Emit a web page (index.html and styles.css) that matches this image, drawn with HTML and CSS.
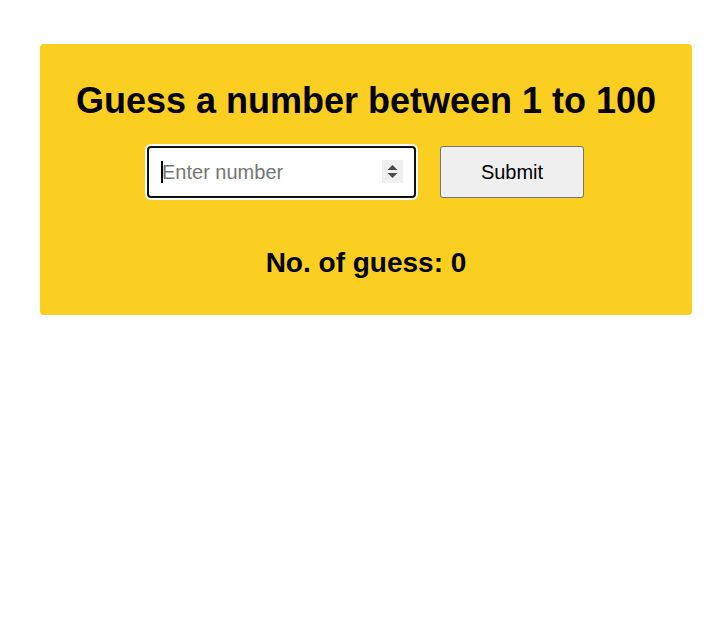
FILE: index.html
```html
<!DOCTYPE html>
<html lang="en">
<head>
<meta charset="utf-8">
<title>Guess the number</title>
<link rel="stylesheet" href="styles.css">
</head>
<body>
  <main class="card">
    <h1 class="title">Guess a number between 1 to 100</h1>
    <form class="row" onsubmit="return false">
      <span class="field">
        <input class="guess-input" type="number" placeholder="Enter number" autofocus>
        <span class="caret"></span>
        <span class="spinner">
          <svg width="21" height="23" viewBox="0 0 21 23">
            <polygon points="5.5,10 10.5,5 15.5,10" fill="#4a4a4a"/>
            <polygon points="5.5,13 15.5,13 10.5,18" fill="#4a4a4a"/>
          </svg>
        </span>
      </span>
      <button class="submit-btn" type="submit">Submit</button>
    </form>
    <h2 class="count">No. of guess: 0</h2>
  </main>
</body>
</html>
```

FILE: styles.css
```css
html, body {
  margin: 0;
  padding: 0;
  background: #ffffff;
}

body {
  font-family: "Liberation Sans", Arial, sans-serif;
  color: #000000;
}

.card {
  margin: 44px 36px 0 40px;
  padding: 36px 0 36px;
  background: #fbcf21;
  border-radius: 4px;
  text-align: center;
}

.title {
  margin: 0 0 25px;
  font-size: 36px;
  line-height: 41px;
  font-weight: bold;
}

.row {
  display: flex;
  justify-content: center;
  align-items: center;
  gap: 24px;
  height: 52px;
  padding-right: 1px;
}

.field {
  position: relative;
  display: block;
  width: 269px;
  height: 52px;
}

.guess-input {
  box-sizing: border-box;
  display: block;
  width: 100%;
  height: 52px;
  padding: 0 12px 0 13px;
  border: 2px solid #101010;
  border-radius: 4px;
  box-shadow: 0 0 0 2px #ffffff;
  outline: none;
  background: #ffffff;
  font-family: "Liberation Sans", Arial, sans-serif;
  font-size: 20px;
  color: #000000;
  caret-color: transparent;
  -moz-appearance: textfield;
}

.guess-input::placeholder {
  color: #757575;
}

.guess-input::-webkit-inner-spin-button,
.guess-input::-webkit-outer-spin-button {
  -webkit-appearance: none;
  margin: 0;
}

.caret {
  position: absolute;
  left: 14px;
  top: 15px;
  width: 2px;
  height: 22px;
  background: #000000;
  pointer-events: none;
}

.spinner {
  position: absolute;
  right: 13px;
  top: 14px;
  width: 21px;
  height: 23px;
  background: #efefef;
  pointer-events: none;
}

.spinner svg {
  display: block;
}

.submit-btn {
  box-sizing: border-box;
  width: 144px;
  height: 52px;
  padding: 0;
  border: 1px solid #767676;
  border-radius: 3px;
  background: #efefef;
  font-family: "Liberation Sans", Arial, sans-serif;
  font-size: 20px;
  color: #000000;
}

.count {
  margin: 49px 0 0;
  font-size: 28px;
  line-height: 32px;
  font-weight: bold;
}
```
